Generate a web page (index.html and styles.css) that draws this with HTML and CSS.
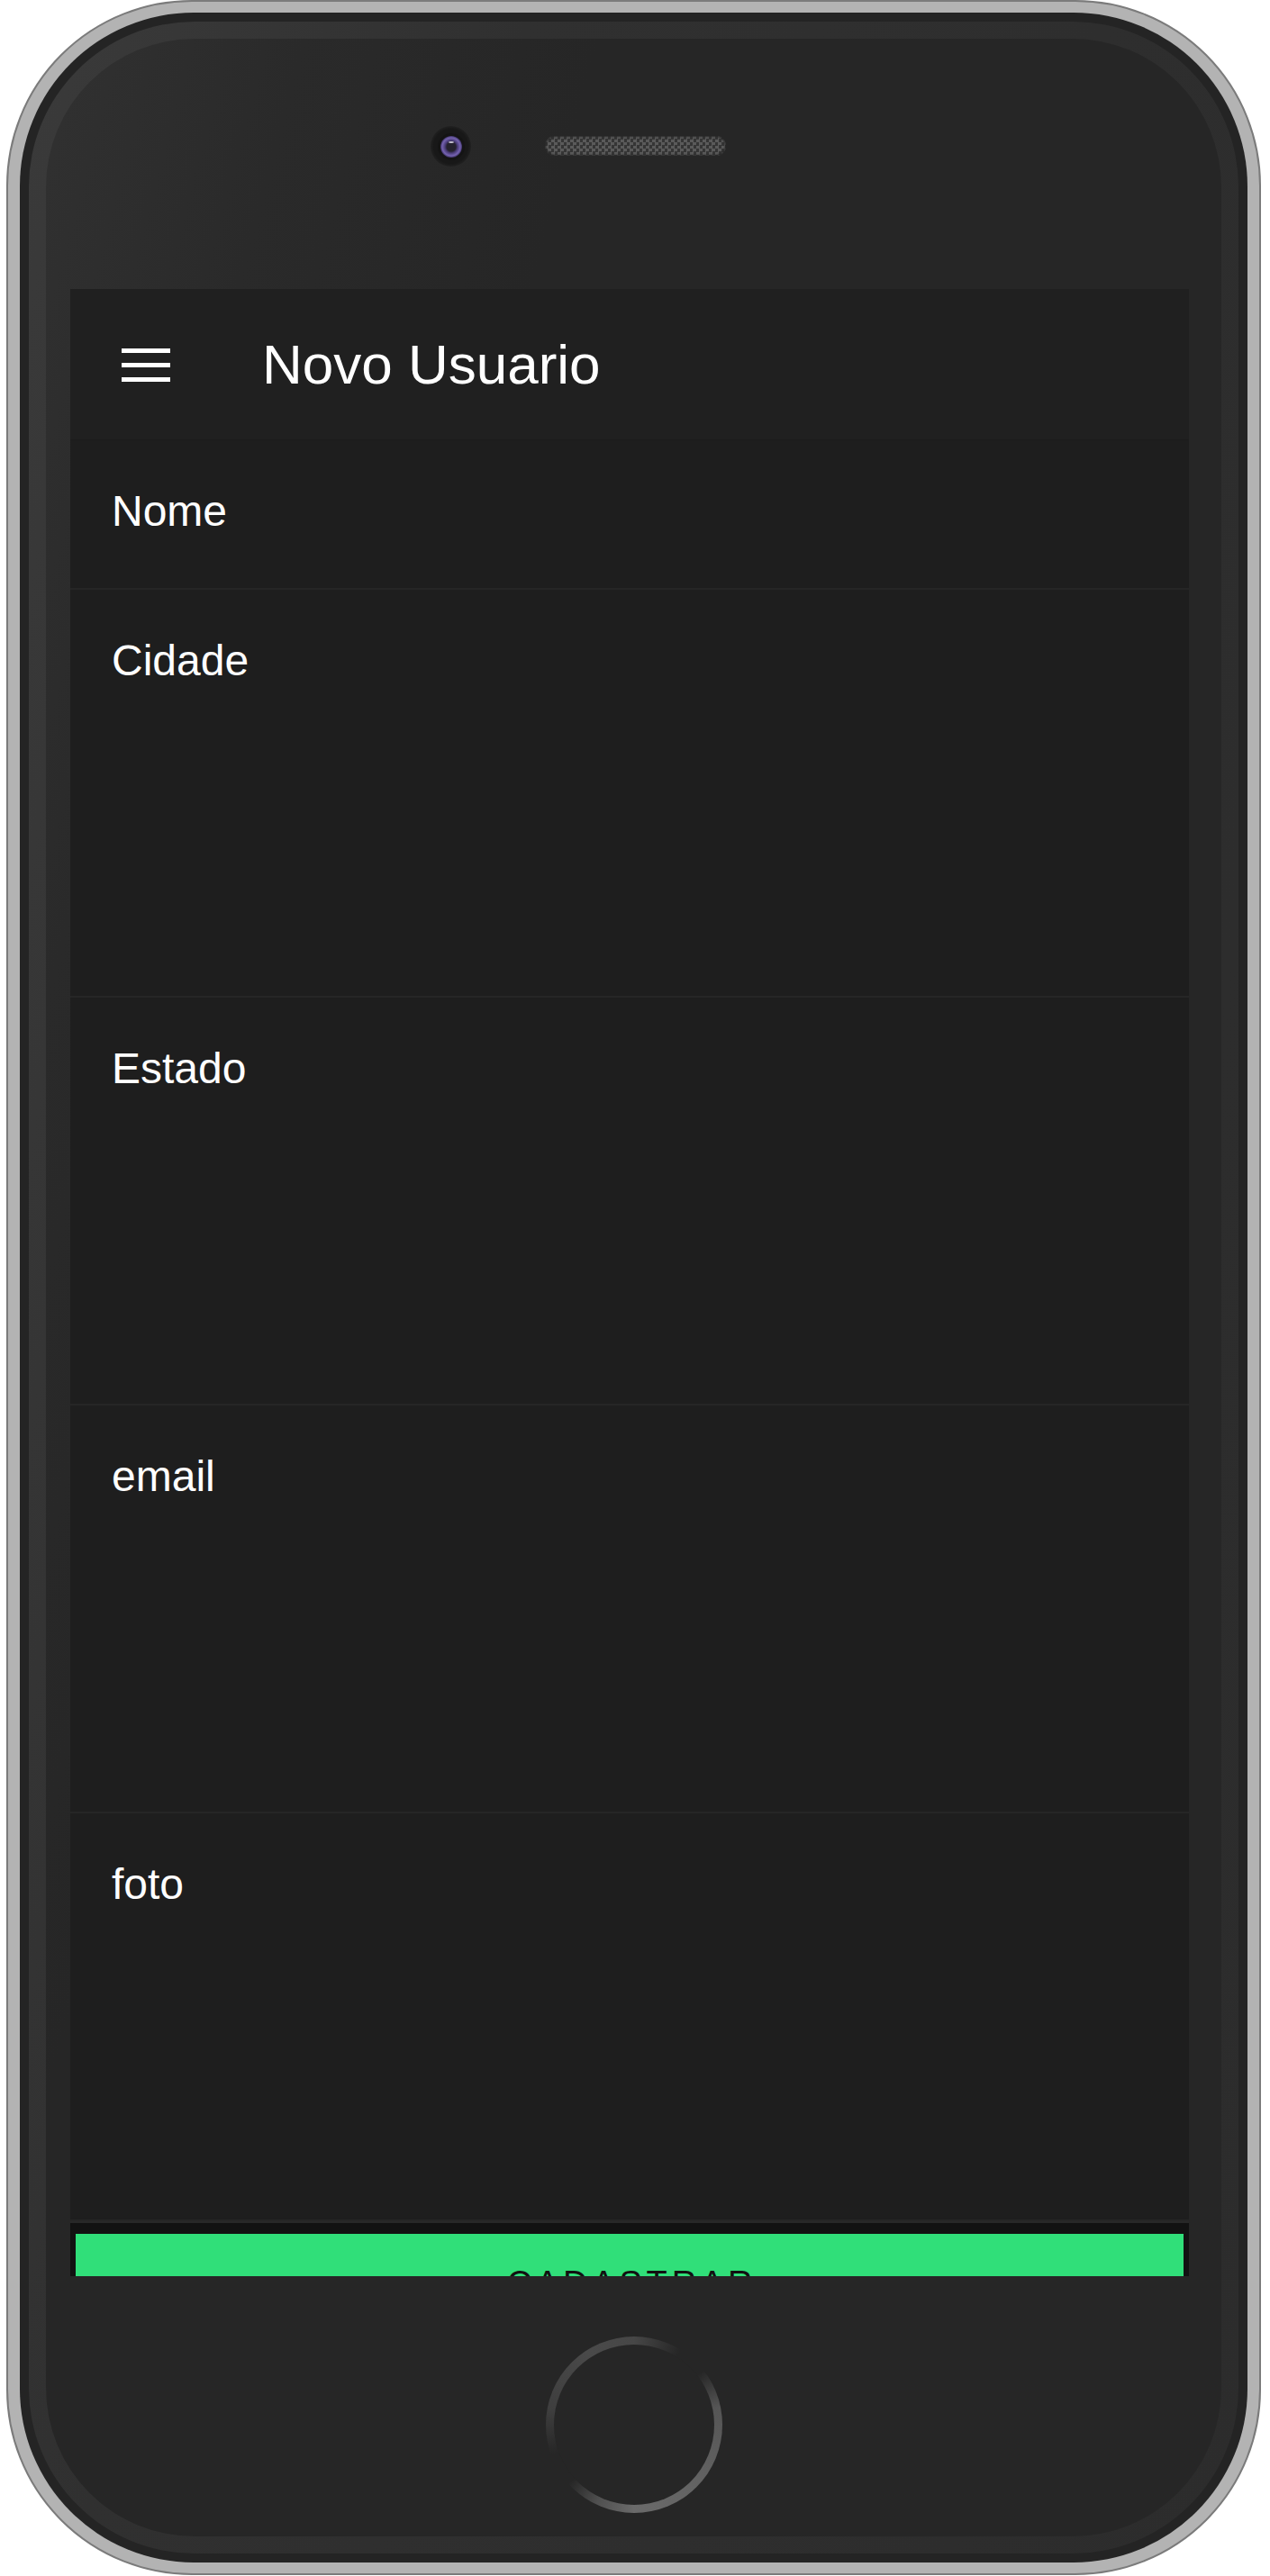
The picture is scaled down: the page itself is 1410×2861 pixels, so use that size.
FILE: index.html
```html
<!DOCTYPE html>
<html lang="pt">
<head>
<meta charset="utf-8">
<title>Novo Usuario</title>
<link rel="stylesheet" href="styles.css">
</head>
<body>
<div class="phone">
  <span class="side-btn side-btn--mute"></span>
  <span class="side-btn side-btn--vol-up"></span>
  <span class="side-btn side-btn--vol-down"></span>
  <span class="side-btn side-btn--power"></span>
  <div class="bezel">
    <div class="ring">
      <div class="face">
        <div class="face-top">
          <div class="camera"><div class="lens"></div></div>
          <div class="speaker"></div>
        </div>
        <div class="screen">
          <header class="toolbar">
            <span class="menu-icon"><i></i><i></i><i></i></span>
            <h1 class="title">Novo Usuario</h1>
          </header>
          <div class="field field--short"><label class="field-label">Nome</label></div>
          <div class="field"><label class="field-label">Cidade</label></div>
          <div class="field"><label class="field-label">Estado</label></div>
          <div class="field"><label class="field-label">email</label></div>
          <div class="field"><label class="field-label">foto</label></div>
          <footer class="footer"><button class="submit" type="button">CADASTRAR</button></footer>
        </div>
        <div class="face-bottom"><div class="home-btn"></div></div>
      </div>
    </div>
  </div>
</div>
</body>
</html>
```
FILE: styles.css
```css
* { box-sizing: border-box; }

html, body {
  margin: 0;
  padding: 0;
  background: #ffffff;
}

body {
  width: 1410px;
  height: 2861px;
  overflow: hidden;
  font-family: "Liberation Sans", Arial, sans-serif;
}

.phone {
  position: relative;
  margin-left: 7px;
  width: 1393px;
  height: 2860px;
  border: 2px solid #7b7b7b;
  border-radius: 206px;
  background: #b3b3b3;
  padding: 12px 13px;
}

.side-btn {
  position: absolute;
  z-index: -1;
  background: #86868b;
  width: 9px;
}
.side-btn--mute { left: -9px; top: 332px; height: 98px; border-radius: 3px 0 0 3px; }
.side-btn--vol-up { left: -9px; top: 556px; height: 181px; border-radius: 3px 0 0 3px; }
.side-btn--vol-down { left: -9px; top: 779px; height: 182px; border-radius: 3px 0 0 3px; }
.side-btn--power { right: -11px; top: 560px; height: 182px; border-radius: 0 3px 3px 0; }

.bezel {
  height: 100%;
  border-radius: 193px;
  background: #242424;
  padding: 10px;
}

.ring {
  height: 100%;
  border-radius: 184px;
  background: linear-gradient(100deg, #3a3a3a 0%, #303030 30%, #2c2c2c 100%);
  padding: 19px;
}

.face {
  height: 100%;
  border-radius: 165px;
  background: linear-gradient(105deg, #313131 0%, #2a2a2a 14%, #262626 30%, #262626 100%);
  padding: 0 36px 0 27px;
  display: flex;
  flex-direction: column;
}

.face-top {
  height: 278px;
  flex: none;
  display: flex;
  align-items: flex-start;
  padding: 97px 0 0 400px;
}

.camera {
  width: 45px;
  height: 45px;
  border-radius: 50%;
  background: radial-gradient(circle, #181818 0 60%, #202020 70%, #2a2a2a 100%);
  display: flex;
  align-items: center;
  justify-content: center;
}

.lens {
  position: relative;
  width: 24px;
  height: 24px;
  border-radius: 50%;
  background: radial-gradient(circle, #25222e 0 5px, #4a3c78 7px, #7563b0 10px, #3e3266 12px);
  box-shadow: 0 0 0 3px #141414;
}
.lens::after {
  content: "";
  position: absolute;
  left: 9px;
  top: 6px;
  width: 6px;
  height: 2px;
  border-radius: 50%;
  background: #c9c6d6;
}

.speaker {
  margin: 11px 0 0 82px;
  width: 201px;
  height: 22px;
  border-radius: 11px;
  background-color: #3a3a3a;
  background-image: conic-gradient(#5a5a5a 25%, #353535 0 50%, #5a5a5a 0 75%, #353535 0);
  background-size: 7px 7px;
  box-shadow: 0 0 2px 1px rgba(38, 38, 38, 0.9) inset;
}

.screen {
  height: 2207px;
  flex: none;
  overflow: hidden;
  background: #1e1e1e;
  display: flex;
  flex-direction: column;
}

.toolbar {
  height: 168px;
  flex: none;
  display: flex;
  align-items: center;
  padding-left: 57px;
  background: #202020;
  border-bottom: 1px solid #1b1b1b;
}

.menu-icon {
  display: flex;
  flex-direction: column;
  gap: 11px;
  width: 54px;
  margin-right: 102px;
  margin-top: 2px;
}
.menu-icon i {
  display: block;
  height: 5px;
  background: #ffffff;
}

.title {
  margin: 0;
  font-size: 62px;
  font-weight: 400;
  color: #ffffff;
  line-height: normal;
}

.field {
  height: 453px;
  flex: none;
  padding: 51px 46px 0;
  border-bottom: 2px solid #262626;
  background: #1e1e1e;
}
.field--short { height: 166px; }

.field-label {
  display: block;
  font-size: 48px;
  color: #ffffff;
  line-height: normal;
}

.footer {
  flex: none;
  background: #121212;
  border-top: 2px solid #282828;
  padding: 12px 6px 0;
}

.submit {
  display: block;
  width: 100%;
  border: none;
  margin: 0;
  background: #30df79;
  color: #111111;
  font-family: "Liberation Sans", Arial, sans-serif;
  font-size: 38px;
  line-height: 38px;
  letter-spacing: 4.8px;
  padding: 36px 0 36px 5px;
  text-align: center;
}

.face-bottom {
  flex: 1;
  display: flex;
  justify-content: center;
  align-items: flex-start;
  padding: 67px 0 0 10px;
}

.home-btn {
  position: relative;
  width: 196px;
  height: 196px;
  border-radius: 50%;
  background: conic-gradient(from 0deg,
    #474747 0deg,
    rgba(60, 60, 60, 0) 32deg,
    rgba(60, 60, 60, 0) 52deg,
    #555555 78deg,
    #626262 130deg,
    #6a6a6a 180deg,
    #505050 205deg,
    rgba(60, 60, 60, 0) 228deg,
    rgba(60, 60, 60, 0) 250deg,
    #3e3e3e 280deg,
    #4a4a4a 330deg,
    #474747 360deg);
}
.home-btn::after {
  content: "";
  position: absolute;
  inset: 9px;
  border-radius: 50%;
  background: #262626;
}
```
